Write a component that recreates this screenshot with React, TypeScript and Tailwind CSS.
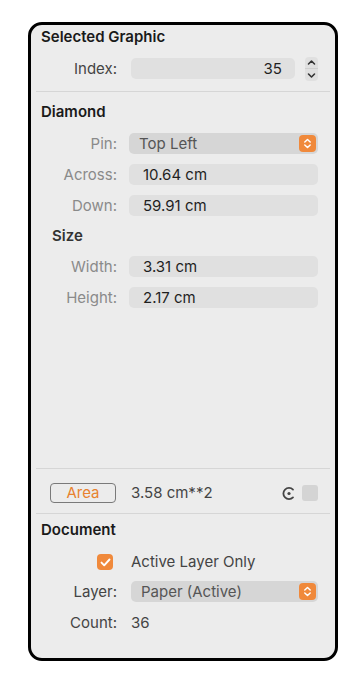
import React from "react";

const font = { fontFamily: "Inter, 'Liberation Sans', sans-serif" };

function Field({ value, right }: { value: string; right?: boolean }) {
  return (
    <div
      className={`flex h-[21px] flex-1 items-center rounded-[5px] bg-[#e0e0e0] text-[15px] leading-[21px] text-[#1f1f1f] ${
        right ? "justify-end pr-[13px]" : "pl-[14px]"
      }`}
    >
      {value}
    </div>
  );
}

function PopupArrows() {
  return (
    <div className="flex h-[17px] w-[17px] items-center justify-center rounded-[4px] bg-[#f0893b]">
      <svg width="9" height="11" viewBox="0 0 9 11" fill="none">
        <path d="M1.8 4 L4.5 1.5 L7.2 4" stroke="white" strokeWidth="1.5" strokeLinecap="round" strokeLinejoin="round" />
        <path d="M1.8 7 L4.5 9.5 L7.2 7" stroke="white" strokeWidth="1.5" strokeLinecap="round" strokeLinejoin="round" />
      </svg>
    </div>
  );
}

function Popup({ value, className = "" }: { value: string; className?: string }) {
  return (
    <div
      className={`flex h-[21px] flex-1 items-center justify-between rounded-[5px] bg-[#d6d6d6] pl-[10px] pr-[2px] text-[15px] leading-[21px] text-[#555] ${className}`}
    >
      <span>{value}</span>
      <PopupArrows />
    </div>
  );
}

function Row({
  label,
  dim,
  children,
  className = "",
}: {
  label: string;
  dim?: boolean;
  children: React.ReactNode;
  className?: string;
}) {
  return (
    <div className={`flex h-[21px] items-center ${className}`}>
      <div
        className={`w-[76px] shrink-0 text-right text-[15px] leading-[21px] ${
          dim ? "text-[#8a8a8a]" : "text-[#444]"
        }`}
      >
        {label}
      </div>
      <div className="ml-[12px] mr-[7px] flex flex-1 items-center">{children}</div>
    </div>
  );
}

function Stepper() {
  return (
    <div className="ml-[10px] flex h-[24px] w-[13px] flex-col items-center justify-between rounded-[4px] bg-[#e0e0e0] py-[2px]">
      <svg width="9" height="7" viewBox="0 0 9 7" fill="none">
        <path d="M1.5 5 L4.5 2 L7.5 5" stroke="#333" strokeWidth="1.6" strokeLinecap="round" strokeLinejoin="round" />
      </svg>
      <div className="h-px w-full bg-[#cfcfcf]" />
      <svg width="9" height="7" viewBox="0 0 9 7" fill="none">
        <path d="M1.5 2 L4.5 5 L7.5 2" stroke="#333" strokeWidth="1.6" strokeLinecap="round" strokeLinejoin="round" />
      </svg>
    </div>
  );
}

function Separator() {
  return <div className="mx-[5px] h-px bg-[#d6d6d6]" />;
}

export default function App() {
  return (
    <div className="min-h-[700px] w-[360px] bg-white pl-[28px] pt-[22px]" style={font}>
      <div className="flex h-[639px] w-[310px] flex-col rounded-[14px] border-[3px] border-black bg-[#ececec]">
        {/* Selected Graphic */}
        <div className="px-[10px] pt-[2px]">
          <div className="h-[20px] text-[15px] font-semibold leading-[20px] text-[#1a1a1a]">
            Selected Graphic
          </div>
          <Row label="Index:" className="mt-[11px]">
            <div className="ml-[2px] flex flex-1 items-center">
              <Field value="35" right />
              <Stepper />
            </div>
          </Row>
        </div>
        <div className="mt-[12px]">
          <Separator />
        </div>

        {/* Diamond */}
        <div className="px-[10px] pt-[10px]">
          <div className="h-[20px] text-[15px] font-semibold leading-[20px] text-[#1a1a1a]">
            Diamond
          </div>
          <div className="mt-[11px] flex flex-col gap-[10px]">
            <Row label="Pin:" dim>
              <Popup value="Top Left" />
            </Row>
            <Row label="Across:" dim>
              <Field value="10.64 cm" />
            </Row>
            <Row label="Down:" dim>
              <Field value="59.91 cm" />
            </Row>
          </div>
          <div className="mt-[10px] h-[20px] pl-[11px] text-[15px] font-semibold leading-[20px] text-[#333]">
            Size
          </div>
          <div className="mt-[10px] flex flex-col gap-[10px]">
            <Row label="Width:" dim>
              <Field value="3.31 cm" />
            </Row>
            <Row label="Height:" dim>
              <Field value="2.17 cm" />
            </Row>
          </div>
        </div>

        <div className="flex-1" />

        <Separator />
        {/* Area */}
        <div className="flex h-[34px] items-center px-[10px] pt-[14px]">
          <div className="ml-[9px] flex h-[20px] w-[66px] items-center justify-center rounded-[4px] border border-[#7a7a7a] text-[15px] leading-[18px] text-[#e8822f]">
            Area
          </div>
          <div className="ml-[15px] flex-1 text-[15px] leading-[20px] text-[#444]">3.58 cm**2</div>
          <svg width="13" height="15" viewBox="0 0 13 15" fill="none" className="mr-[7px]">
            <path
              d="M11 3.6 A5.6 5.6 0 1 0 11 11.4"
              stroke="#444"
              strokeWidth="1.8"
              strokeLinecap="round"
            />
            <circle cx="7" cy="7.5" r="1.6" fill="#444" />
          </svg>
          <div className="mr-[7px] h-[16px] w-[16px] rounded-[3px] bg-[#d4d4d4]" />
        </div>
        <div className="mt-[10px]">
          <Separator />
        </div>

        {/* Document */}
        <div className="px-[10px] pb-[25px] pt-[6px]">
          <div className="h-[20px] text-[15px] font-semibold leading-[20px] text-[#1a1a1a]">
            Document
          </div>
          <div className="mt-[12px] flex h-[20px] items-center">
            <div className="ml-[56px] flex h-[16px] w-[16px] items-center justify-center rounded-[4px] bg-[#f0893b]">
              <svg width="11" height="9" viewBox="0 0 11 9" fill="none">
                <path d="M1.5 4.6 L4.2 7.3 L9.5 1.5" stroke="white" strokeWidth="1.9" strokeLinecap="round" strokeLinejoin="round" />
              </svg>
            </div>
            <span className="ml-[18px] text-[15px] leading-[20px] text-[#444]">Active Layer Only</span>
          </div>
          <Row label="Layer:" className="mt-[9px]">
            <Popup value="Paper (Active)" className="ml-[2px]" />
          </Row>
          <Row label="Count:" className="mt-[10px]">
            <span className="ml-[2px] text-[15px] leading-[21px] text-[#444]">36</span>
          </Row>
        </div>
      </div>
    </div>
  );
}
